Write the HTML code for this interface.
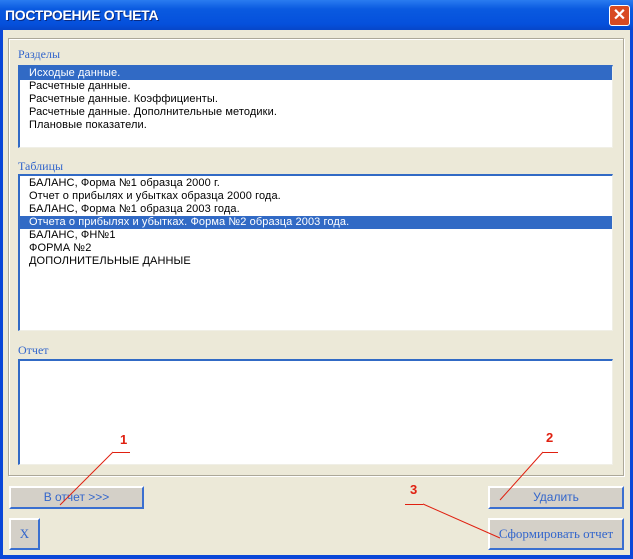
<!DOCTYPE html>
<html><head><meta charset="utf-8"><style>
*{margin:0;padding:0;box-sizing:border-box}
body{width:633px;height:559px;overflow:hidden;background:#0a47d8;position:relative;font-family:"Liberation Sans",sans-serif}
.title{position:absolute;left:0;top:0;width:633px;height:30px;background:linear-gradient(#2a7cf0,#0a5ae0 30%,#0550dc 80%,#0646c8);}
.title span{position:absolute;left:5px;top:7px;color:#fff;font-weight:bold;font-size:14px;letter-spacing:-0.3px;text-shadow:1px 1px #0a2a80}
.close{position:absolute;left:609px;top:5px;width:21px;height:21px;border:1px solid #fff;border-radius:3px;background:#d84a22;color:#fff;font-size:16px;font-weight:bold;text-align:center;line-height:19px}
.client{position:absolute;left:3px;top:30px;width:627px;height:525px;background:#ece9d8}
.frame{position:absolute;left:8px;top:38px;width:616px;height:438px;border:1px solid #aca899;box-shadow:inset 1px 1px #fff,1px 1px #fff}
.lbl{position:absolute;font-family:"Liberation Serif",serif;font-size:12px;color:#3366cc}
.box{position:absolute;background:#fff;border-top:2px solid #316ac5;border-left:2px solid #316ac5;border-right:1px solid #f0efe6;border-bottom:1px solid #f0efe6;font-size:11px;line-height:13px;letter-spacing:0.1px}
.box div{padding-left:9px;height:13px;white-space:nowrap}
.sel{background:#316ac5;color:#fff}
.btn{position:absolute;background:#d4d0c8;border-top:2px solid #fff;border-left:2px solid #fff;border-right:2px solid #3a6fd0;border-bottom:2px solid #3a6fd0;color:#3366cc;text-align:center;font-size:12px}
.ser{font-family:"Liberation Serif",serif;font-size:13px}
.num{position:absolute;color:#e02010;font-size:13px;font-weight:bold}
</style></head><body>
<div class="title"><span>ПОСТРОЕНИЕ ОТЧЕТА</span></div>
<div class="close">✕</div>
<div class="client"></div>
<div class="frame"></div>
<div class="lbl" style="left:18px;top:47px">Разделы</div>
<div class="box" style="left:18px;top:65px;width:595px;height:83px">
<div class="sel">Исходые данные.</div><div>Расчетные данные.</div><div>Расчетные данные. Коэффициенты.</div><div>Расчетные данные. Дополнительные методики.</div><div>Плановые показатели.</div></div>
<div class="lbl" style="left:18px;top:159px">Таблицы</div>
<div class="box" style="left:18px;top:174px;width:595px;height:157px;padding-top:1px">
<div>БАЛАНС, Форма №1 образца 2000 г.</div><div>Отчет о прибылях и убытках образца 2000 года.</div><div>БАЛАНС, Форма №1 образца 2003 года.</div><div class="sel">Отчета о прибылях и убытках. Форма №2 образца 2003 года.</div><div>БАЛАНС, ФН№1</div><div>ФОРМА №2</div><div>ДОПОЛНИТЕЛЬНЫЕ ДАННЫЕ</div></div>
<div class="lbl" style="left:18px;top:343px">Отчет</div>
<div class="box" style="left:18px;top:359px;width:595px;height:106px"></div>
<div class="btn" style="left:9px;top:486px;width:135px;height:23px;line-height:19px">В отчет &gt;&gt;&gt;</div>
<div class="btn" style="left:488px;top:486px;width:136px;height:23px;line-height:19px">Удалить</div>
<div class="btn ser" style="left:9px;top:518px;width:31px;height:32px;line-height:28px">X</div>
<div class="btn ser" style="left:488px;top:518px;width:136px;height:32px;line-height:28px">Сформировать отчет</div>
<svg style="position:absolute;left:0;top:0" width="633" height="559">
<g stroke="#e02010" stroke-width="1" fill="none">
<line x1="113" y1="452.5" x2="130" y2="452.5"/><line x1="113" y1="452" x2="60" y2="505"/>
<line x1="543" y1="452.5" x2="558" y2="452.5"/><line x1="543" y1="452" x2="500" y2="500"/>
<line x1="405" y1="504.5" x2="423" y2="504.5"/><line x1="423" y1="504" x2="500" y2="538"/>
</g></svg>
<div class="num" style="left:120px;top:432px">1</div>
<div class="num" style="left:546px;top:430px">2</div>
<div class="num" style="left:410px;top:482px">3</div>
</body></html>
